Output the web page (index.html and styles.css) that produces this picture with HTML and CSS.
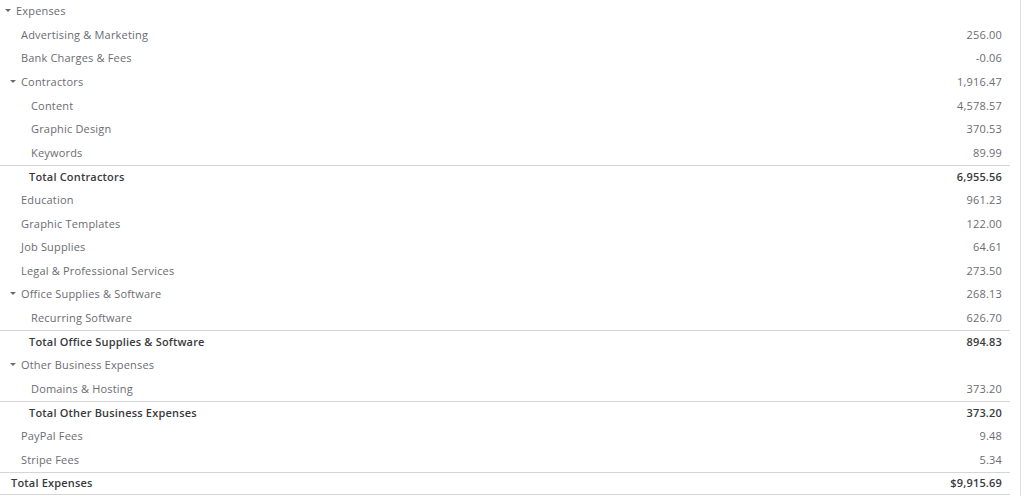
FILE: index.html
```html
<!DOCTYPE html>
<html>
<head>
<meta charset="utf-8">
<link rel="stylesheet" href="styles.css">
</head>
<body>
<div class="frame">
  <div class="report">
    <div class="row l0"><span class="label"><span class="caret"></span>Expenses</span><span class="amt"></span></div>
    <div class="row l1"><span class="label">Advertising &amp; Marketing</span><span class="amt">256.00</span></div>
    <div class="row l1"><span class="label">Bank Charges &amp; Fees</span><span class="amt">-0.06</span></div>
    <div class="row l1p"><span class="label"><span class="caret"></span>Contractors</span><span class="amt">1,916.47</span></div>
    <div class="row l2"><span class="label">Content</span><span class="amt">4,578.57</span></div>
    <div class="row l2"><span class="label">Graphic Design</span><span class="amt">370.53</span></div>
    <div class="row l2"><span class="label">Keywords</span><span class="amt">89.99</span></div>
    <div class="row total t1"><span class="label">Total Contractors</span><span class="amt">6,955.56</span></div>
    <div class="row l1"><span class="label">Education</span><span class="amt">961.23</span></div>
    <div class="row l1"><span class="label">Graphic Templates</span><span class="amt">122.00</span></div>
    <div class="row l1"><span class="label">Job Supplies</span><span class="amt">64.61</span></div>
    <div class="row l1"><span class="label">Legal &amp; Professional Services</span><span class="amt">273.50</span></div>
    <div class="row l1p"><span class="label"><span class="caret"></span>Office Supplies &amp; Software</span><span class="amt">268.13</span></div>
    <div class="row l2"><span class="label">Recurring Software</span><span class="amt">626.70</span></div>
    <div class="row total t1"><span class="label">Total Office Supplies &amp; Software</span><span class="amt">894.83</span></div>
    <div class="row l1p"><span class="label"><span class="caret"></span>Other Business Expenses</span><span class="amt"></span></div>
    <div class="row l2"><span class="label">Domains &amp; Hosting</span><span class="amt">373.20</span></div>
    <div class="row total t1"><span class="label">Total Other Business Expenses</span><span class="amt">373.20</span></div>
    <div class="row l1"><span class="label">PayPal Fees</span><span class="amt">9.48</span></div>
    <div class="row l1"><span class="label">Stripe Fees</span><span class="amt">5.34</span></div>
    <div class="row total t0 last"><span class="label">Total Expenses</span><span class="amt">$9,915.69</span></div>
  </div>
</div>
</body>
</html>
```
FILE: styles.css
```css
html, body {
  margin: 0;
  padding: 0;
  background: #ffffff;
}
body {
  font-family: "Open Sans", "Noto Sans", sans-serif;
  font-size: 11px;
  letter-spacing: 0.18px;
  color: #6b6c72;
}
.frame {
  width: 1021px;
  height: 496px;
  border-right: 1px solid #dcdde0;
  box-sizing: border-box;
}
.report {
  width: 1010px;
}
.row {
  display: flex;
  justify-content: space-between;
  align-items: center;
  height: 23.6px;
  box-sizing: border-box;
  padding-right: 8px;
  padding-bottom: 2px;
  white-space: nowrap;
}
.label {
  display: flex;
  align-items: center;
}
.caret {
  width: 0;
  height: 0;
  border-left: 3px solid transparent;
  border-right: 3px solid transparent;
  border-top: 3px solid #6b6c72;
  margin-right: 5px;
}
.l0 { padding-left: 5px; }
.l1 { padding-left: 21px; }
.l1p { padding-left: 10px; }
.l2 { padding-left: 31px; }
.total {
  border-top: 1px solid #d4d5d8;
  font-weight: 600;
  color: #393a3d;
}
.t1 { padding-left: 29px; }
.t0 { padding-left: 11px; }
.last { border-bottom: 1px solid #d4d5d8; }
```
